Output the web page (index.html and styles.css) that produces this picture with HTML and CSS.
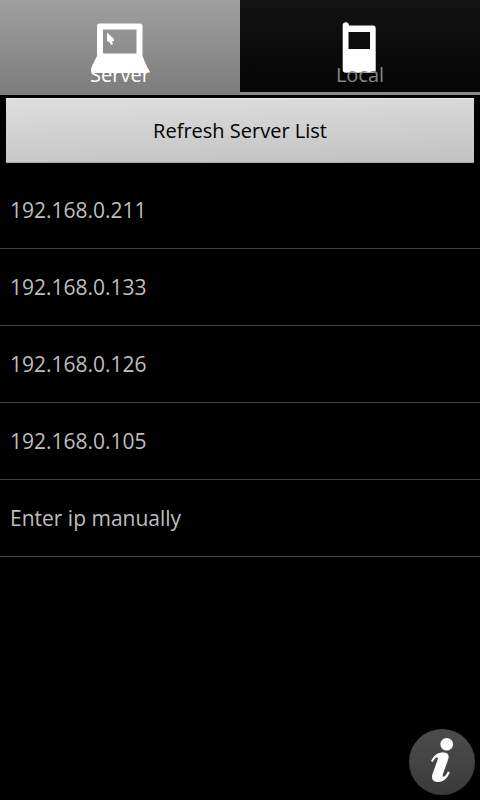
FILE: index.html
```html
<!DOCTYPE html>
<html lang="en">
<head>
<meta charset="utf-8">
<meta name="viewport" content="width=device-width, initial-scale=1">
<title>Server list</title>
<link rel="stylesheet" href="styles.css">
</head>
<body>
<nav class="tabs" role="tablist">
  <button class="tab tab-active" type="button" role="tab" aria-selected="true">
    <svg class="tab-icon" width="60" height="52" viewBox="0 0 60 52" aria-hidden="true">
      <path fill="#fff" fill-rule="evenodd" d="M9 1.500H50Q52.500 1.500 52.500 4V34L57 45L59 48V49.500H57L56 51H4Q1 50 1 47L2 44L7 34V4Q7 1.500 9 1.500ZM13 7.500V31.500H46.500V7.500Z"/>
      <path fill="#fff" d="M17 10.500L24 17V19L22 19.500L23 22L21 23L19.500 20L17 19Z"/>
    </svg>
    <span class="tab-label">Server</span>
  </button>
  <button class="tab" type="button" role="tab" aria-selected="false">
    <svg class="tab-icon" width="60" height="52" viewBox="0 0 60 52" aria-hidden="true">
      <path fill="#fff" fill-rule="evenodd" d="M12.700 3Q13 0.300 16 0.300Q18.500 0.300 19 3.500H43Q45.700 3.500 45.700 6.500V48Q45.700 50.700 43 50.700H16Q12.700 50.700 12.700 47.500ZM18.500 10V27H40V10Z"/>
    </svg>
    <span class="tab-label">Local</span>
  </button>
</nav>
<main class="content">
  <button class="refresh" type="button">Refresh Server List</button>
  <ul class="servers">
    <li><button class="server" type="button">192.168.0.211</button></li>
    <li><button class="server" type="button">192.168.0.133</button></li>
    <li><button class="server" type="button">192.168.0.126</button></li>
    <li><button class="server" type="button">192.168.0.105</button></li>
    <li><button class="server" type="button">Enter ip manually</button></li>
  </ul>
</main>
<button class="info" type="button" aria-label="Information">
  <svg width="68" height="68" viewBox="0 0 68 68" aria-hidden="true">
    <defs>
      <linearGradient id="disc" x1="0" y1="0" x2="0" y2="1">
        <stop offset="0" stop-color="#4c4c4c"/>
        <stop offset="0.5" stop-color="#444"/>
        <stop offset="1" stop-color="#3a3a3a"/>
      </linearGradient>
    </defs>
    <circle cx="34" cy="34" r="33" fill="url(#disc)"/>
    <circle cx="38.700" cy="16.300" r="6.300" fill="#fff"/>
    <path fill="#fff" d="M23 33C26 27 30 24.500 35 24.500C40 24.500 41.500 27 40.300 31L35 46C34 49.500 35.500 49.500 37.500 47.500L40 43.500L41.800 44.500C39 51 35 54 30 54C25 54 23 51 24.500 46L29.500 32C30.500 28.500 29 28.500 27 30.500L24.500 34Z"/>
  </svg>
</button>
</body>
</html>
```

FILE: styles.css
```css
* {
  box-sizing: border-box;
}

body {
  margin: 0;
  min-height: 100vh;
  background: #000;
  color: #bebebe;
  font-family: "Open Sans", "Noto Sans", sans-serif;
}

button {
  margin: 0;
  border: 0;
  padding: 0;
  background: none;
  color: inherit;
  font: inherit;
  cursor: pointer;
}

.tabs {
  display: grid;
  grid-template-columns: 1fr 1fr;
}

.tab {
  display: flex;
  flex-direction: column;
  align-items: center;
  height: 95px;
  padding-top: 22px;
  border-bottom: 3px solid #8a8a8a;
  background: linear-gradient(#131313, #050505) padding-box;
  color: #858585;
  font-size: 20px;
  line-height: 24px;
}

.tab-active {
  border-bottom: 0;
  background: linear-gradient(#a0a0a0, #7c7c7c);
  color: #fff;
}

.tab-icon {
  flex: none;
}

.tab-label {
  position: relative;
  margin-top: -11px;
}

.content {
  padding-top: 3px;
}

.refresh {
  display: block;
  width: calc(100% - 12px);
  height: 65px;
  margin: 0 6px 9px;
  border-top: 1px solid #ececec;
  border-bottom: 1px solid #a8a8a8;
  background: linear-gradient(178deg, #dedede, #c2c2c2);
  color: #000;
  font-size: 20px;
}

.servers {
  margin: 0;
  padding: 0;
  list-style: none;
}

.server {
  display: block;
  width: 100%;
  height: 77px;
  padding: 0 10px;
  border-bottom: 1px solid #424242;
  font-size: 21px;
  text-align: left;
}

.info {
  position: fixed;
  right: 4px;
  bottom: 4px;
}

.info svg {
  display: block;
}
```
